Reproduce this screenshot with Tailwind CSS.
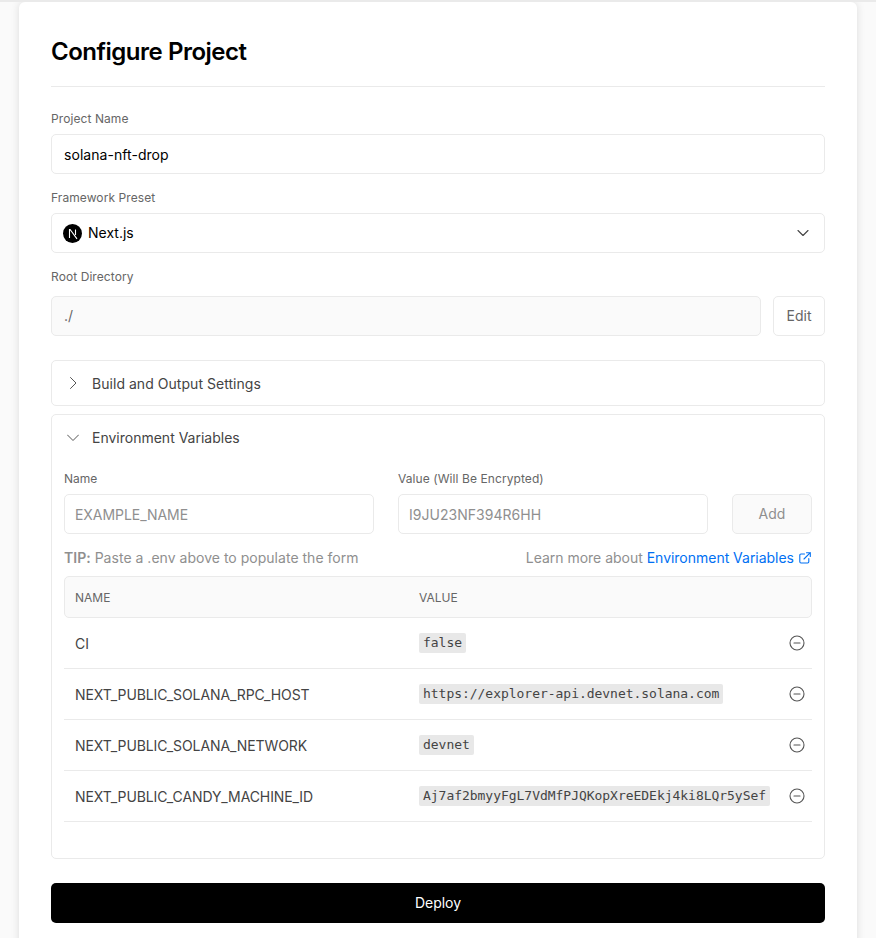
<!DOCTYPE html>
<html lang="en">
<head>
    <meta charset="UTF-8">
    <meta name="viewport" content="width=device-width, initial-scale=1.0">
    <title>Configure Project</title>
    <script src="https://cdn.jsdelivr.net/npm/@tailwindcss/browser@4"></script>
</head>
<body class="bg-[#fafafa] font-['Inter',sans-serif] text-black overflow-hidden">
    <div class="h-[938px] overflow-hidden border-t-2 border-[#eaeaea] px-[19px]">
        <main class="w-[838px] h-[960px] bg-white rounded-t-md shadow-[0_0_8px_rgba(0,0,0,0.12)] px-8 pt-8">
            <!-- Title -->
            <h1 class="text-2xl leading-[36px] font-semibold tracking-[-0.48px] pb-[16px] border-b border-[#eaeaea]">Configure Project</h1>

            <label class="block text-xs leading-[16px] tracking-[0.08px] text-[#666] mt-[24px] mb-[7px]">Project Name</label>
            <div class="h-10 flex items-center px-[12px] text-sm tracking-[0.05px] border border-[#eaeaea] rounded-[5px]"><span class="pt-[2px]">solana-nft-drop</span></div>

            <label class="block text-xs leading-[16px] tracking-[0.08px] text-[#666] mt-[16px] mb-[7px]">Framework Preset</label>
            <div class="h-10 flex items-center justify-between pl-[11px] pr-[15px] text-sm border border-[#eaeaea] rounded-[5px]">
                <div class="flex items-center gap-[6px]">
                    <svg width="19" height="19" viewBox="0 0 19 19"><circle cx="9.5" cy="9.5" r="9.5" fill="#000"/><path d="M6.5 14V5.5h.6L14 14.8" stroke="#fff" stroke-width="1.1" fill="none"/><path d="M12.5 5.5V11" stroke="#fff" stroke-width="1.1"/></svg>
                    <span>Next.js</span>
                </div>
                <svg width="12" height="12" viewBox="0 0 12 12" fill="none" stroke="#444" stroke-width="1.1" stroke-linecap="round" stroke-linejoin="round"><path d="M1 3.5l5 5 5-5"/></svg>
            </div>

            <label class="block text-xs leading-[16px] tracking-[0.08px] text-[#666] mt-[16px] mb-[11px]">Root Directory</label>
            <div class="flex gap-3">
                <div class="flex-1 h-10 flex items-center px-[12px] text-sm text-[#666] bg-[#fafafa] border border-[#eaeaea] rounded-[5px]">./</div>
                <div class="w-[52px] h-10 flex items-center justify-center text-sm text-[#666] border border-[#eaeaea] rounded-[5px]">Edit</div>
            </div>

            <!-- Build settings -->
            <div class="mt-6 h-[46px] flex items-center pl-[16px] gap-[14px] text-sm tracking-[0.04px] text-[#444] border border-[#eaeaea] rounded-[5px]">
                <svg width="10" height="12" viewBox="0 0 10 12" fill="none" stroke="#555" stroke-width="1" stroke-linecap="round" stroke-linejoin="round"><path d="M2.5 .5l5.5 5.5-5.5 5.5"/></svg>
                <span class="pt-[2px]">Build and Output Settings</span>
            </div>

            <!-- Env vars -->
            <section class="mt-2 h-[445px] border border-[#eaeaea] rounded-[5px] px-3">
                <div class="h-[46px] flex items-center pl-[3px] gap-[13px] text-sm text-[#444]">
                    <svg width="12" height="10" viewBox="0 0 12 10" fill="none" stroke="#555" stroke-width="1" stroke-linecap="round" stroke-linejoin="round"><path d="M.5 2l5.5 5.5L11.500 2"/></svg>
                    <span>Environment Variables</span>
                </div>
                <div class="flex gap-6 mt-[10px]">
                    <div class="w-[310px]">
                        <label class="block text-xs leading-[16px] text-[#666] mb-[7px]">Name</label>
                        <div class="h-10 flex items-center px-[10px] text-sm tracking-[-0.05px] text-[#8f8f8f] border border-[#eaeaea] rounded-[5px]"><span class="pt-[1px]">EXAMPLE_NAME</span></div>
                    </div>
                    <div class="w-[310px]">
                        <label class="block text-xs leading-[16px] tracking-[0.08px] text-[#666] mb-[7px]">Value (Will Be Encrypted)</label>
                        <div class="h-10 flex items-center px-[10px] text-sm tracking-[0.03px] text-[#8f8f8f] border border-[#eaeaea] rounded-[5px]"><span class="pt-[1px]">I9JU23NF394R6HH</span></div>
                    </div>
                    <div class="w-[80px] pt-[23px]">
                        <div class="h-10 flex items-center justify-center text-sm text-[#8f8f8f] bg-[#fafafa] border border-[#eaeaea] rounded-[5px]">Add</div>
                    </div>
                </div>
                <div class="flex justify-between items-center h-[20px] mt-[14px] text-sm text-[#8f8f8f]">
                    <p class="tracking-[0.02px]"><b class="font-semibold">TIP:</b> Paste a .env above to populate the form</p>
                    <p class="flex items-center gap-[5px] tracking-[-0.02px] pr-[1px]">
                        <span>Learn more about <span class="text-[#0070f3]">Environment Variables</span></span>
                        <svg width="12" height="12" viewBox="0 0 12 12" fill="none" stroke="#0070f3" stroke-width="1.1" stroke-linecap="round" stroke-linejoin="round"><path d="M5.500 2H2a1.200 1.200 0 0 0-1.200 1.200v6.600A1.200 1.200 0 0 0 2 11h6.600a1.200 1.200 0 0 0 1.200-1.200V6.500"/><path d="M7.500 .7h3.800v3.800M11.300 .7L5 7"/></svg>
                    </p>
                </div>

                <!-- Table -->
                <div class="mt-[8px] h-[42px] grid grid-cols-[344px_1fr] items-center px-[10px] text-xs text-[#666] bg-[#fafafa] border border-[#eaeaea] rounded-[5px]">
                    <span class="pt-[2px]">NAME</span>
                    <span class="pt-[2px]">VALUE</span>
                </div>
                <div class="h-[51px] grid grid-cols-[344px_1fr_24px] items-center pl-[11px] pr-[7px] text-sm tracking-[-0.1px] text-[#444] border-b border-[#eaeaea]">
                    <span class="pt-[2px]">CI</span>
                    <span class="flex"><code class="font-['DejaVu_Sans_Mono',monospace] text-[13px] tracking-[-0.03px] leading-[20px] h-[20px] bg-[#e8e8e8] text-[#444] rounded-[2px] px-[4px]">false</code></span>
                    <svg class="justify-self-end" width="16" height="16" viewBox="0 0 16 16" fill="none" stroke="#555" stroke-width="1.1" stroke-linecap="round"><circle cx="8" cy="8" r="7"/><path d="M5 8h6"/></svg>
                </div>
                <div class="h-[51px] grid grid-cols-[344px_1fr_24px] items-center pl-[11px] pr-[7px] text-sm tracking-[-0.1px] text-[#444] border-b border-[#eaeaea]">
                    <span class="pt-[2px]">NEXT_PUBLIC_SOLANA_RPC_HOST</span>
                    <span class="flex"><code class="font-['DejaVu_Sans_Mono',monospace] text-[13px] tracking-[-0.03px] leading-[20px] h-[20px] bg-[#e8e8e8] text-[#444] rounded-[2px] px-[4px]">https://explorer-api.devnet.solana.com</code></span>
                    <svg class="justify-self-end" width="16" height="16" viewBox="0 0 16 16" fill="none" stroke="#555" stroke-width="1.1" stroke-linecap="round"><circle cx="8" cy="8" r="7"/><path d="M5 8h6"/></svg>
                </div>
                <div class="h-[51px] grid grid-cols-[344px_1fr_24px] items-center pl-[11px] pr-[7px] text-sm tracking-[-0.1px] text-[#444] border-b border-[#eaeaea]">
                    <span class="pt-[2px]">NEXT_PUBLIC_SOLANA_NETWORK</span>
                    <span class="flex"><code class="font-['DejaVu_Sans_Mono',monospace] text-[13px] tracking-[-0.03px] leading-[20px] h-[20px] bg-[#e8e8e8] text-[#444] rounded-[2px] px-[4px]">devnet</code></span>
                    <svg class="justify-self-end" width="16" height="16" viewBox="0 0 16 16" fill="none" stroke="#555" stroke-width="1.1" stroke-linecap="round"><circle cx="8" cy="8" r="7"/><path d="M5 8h6"/></svg>
                </div>
                <div class="h-[51px] grid grid-cols-[344px_1fr_24px] items-center pl-[11px] pr-[7px] text-sm tracking-[-0.1px] text-[#444] border-b border-[#eaeaea]">
                    <span class="pt-[2px]">NEXT_PUBLIC_CANDY_MACHINE_ID</span>
                    <span class="flex"><code class="font-['DejaVu_Sans_Mono',monospace] text-[13px] tracking-[-0.03px] leading-[20px] h-[20px] bg-[#e8e8e8] text-[#444] rounded-[2px] px-[4px]">Aj7af2bmyyFgL7VdMfPJQKopXreEDEkj4ki8LQr5ySef</code></span>
                    <svg class="justify-self-end" width="16" height="16" viewBox="0 0 16 16" fill="none" stroke="#555" stroke-width="1.1" stroke-linecap="round"><circle cx="8" cy="8" r="7"/><path d="M5 8h6"/></svg>
                </div>
            </section>

            <button class="mt-6 w-full h-10 bg-black text-white text-sm rounded-[5px]">Deploy</button>
        </main>
    </div>
</body>
</html>
